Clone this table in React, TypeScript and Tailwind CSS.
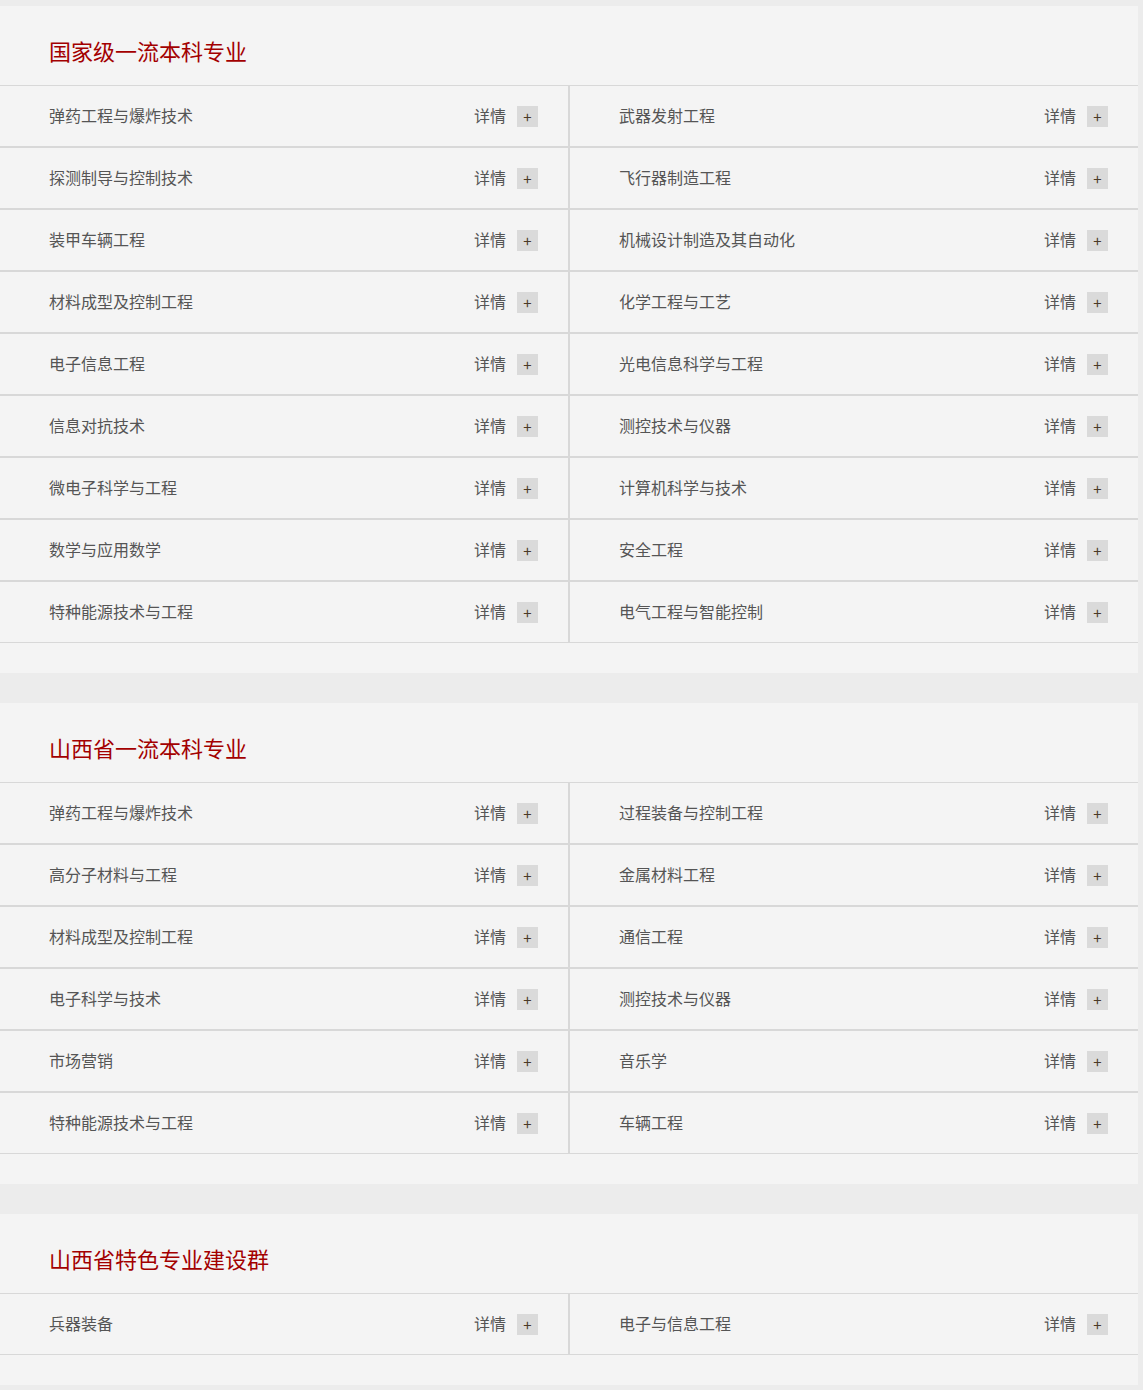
import React from 'react';

type Group = {
  title: string;
  majors: string[];
};

const groups: Group[] = [
  {
    title: '国家级一流本科专业',
    majors: [
      '弹药工程与爆炸技术', '武器发射工程',
      '探测制导与控制技术', '飞行器制造工程',
      '装甲车辆工程', '机械设计制造及其自动化',
      '材料成型及控制工程', '化学工程与工艺',
      '电子信息工程', '光电信息科学与工程',
      '信息对抗技术', '测控技术与仪器',
      '微电子科学与工程', '计算机科学与技术',
      '数学与应用数学', '安全工程',
      '特种能源技术与工程', '电气工程与智能控制',
    ],
  },
  {
    title: '山西省一流本科专业',
    majors: [
      '弹药工程与爆炸技术', '过程装备与控制工程',
      '高分子材料与工程', '金属材料工程',
      '材料成型及控制工程', '通信工程',
      '电子科学与技术', '测控技术与仪器',
      '市场营销', '音乐学',
      '特种能源技术与工程', '车辆工程',
    ],
  },
  {
    title: '山西省特色专业建设群',
    majors: ['兵器装备', '电子与信息工程'],
  },
];

const MajorCell: React.FC<{ name: string; right: boolean }> = ({ name, right }) => (
  <div
    className={
      right
        ? 'flex h-[62px] items-center justify-between border-y border-l border-[#d8d8d8] pb-[2px] pl-[49px] pr-[30px]'
        : 'flex h-[62px] items-center justify-between border-y border-r border-[#d8d8d8] pb-[2px] pl-[49px] pr-[30px]'
    }
  >
    <a href="#" className="text-[16px] text-[#555]">{name}</a>
    <div className="flex items-center gap-[11px]">
      <span className="text-[16px] text-[#555]">详情</span>
      <span className="mt-[2px] flex h-[21px] w-[21px] items-center justify-center bg-[#dadada] text-[15px] leading-none text-[#4a3a28]">
        +
      </span>
    </div>
  </div>
);

export default function App() {
  return (
    <div
      className="min-h-[1390px] w-full bg-[#ececec] pt-[6px] pb-[5px]"
      style={{ fontFamily: '"Microsoft YaHei", "Noto Sans CJK SC", "Noto Sans", sans-serif' }}
    >
      <div className="flex w-[1138px] flex-col gap-[30px]">
        {groups.map((group) => (
          <section key={group.title} className="bg-[#f4f4f4] pb-[30px]">
            <h2 className="pl-[49px] pt-[26px] pb-[17px] text-[22px] leading-[36px] font-normal text-[#a30000]">
              {group.title}
            </h2>
            <div className="grid grid-cols-2">
              {group.majors.map((m, i) => (
                <MajorCell key={i} name={m} right={i % 2 === 1} />
              ))}
            </div>
          </section>
        ))}
      </div>
    </div>
  );
}
